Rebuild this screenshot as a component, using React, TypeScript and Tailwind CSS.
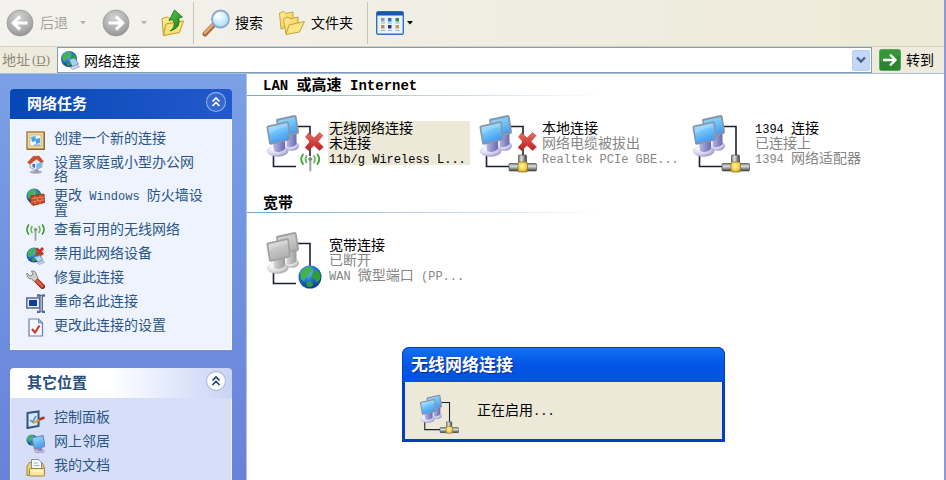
import React from "react";

type Overlay = "antenna" | "plug" | "globe";

/* Latin runs use half-width monospaced letters beside the full-width Chinese ones. */
function Latin({ children }: { children: string }) {
  return <span className="whitespace-pre font-['Liberation_Mono',monospace] text-[12px] leading-[12px]">{children}</span>;
}

function SharedPaints() {
  return (
    <svg className="absolute h-0 w-0" aria-hidden="true">
      <defs>
        <linearGradient id="screen" x1="0" y1="0" x2="0.4" y2="1">
          <stop offset="0" stopColor="#9fdcfb" />
          <stop offset="0.5" stopColor="#70c4fa" />
          <stop offset="1" stopColor="#459cf0" />
        </linearGradient>
        <linearGradient id="screenOff" x1="0" y1="0" x2="0.4" y2="1">
          <stop offset="0" stopColor="#dadada" />
          <stop offset="1" stopColor="#b2b2b2" />
        </linearGradient>
        <linearGradient id="neck" x1="0" y1="0" x2="1" y2="0">
          <stop offset="0" stopColor="#b9b8e4" />
          <stop offset="1" stopColor="#6a69b2" />
        </linearGradient>
        <linearGradient id="neckOff" x1="0" y1="0" x2="1" y2="0">
          <stop offset="0" stopColor="#d8d8d8" />
          <stop offset="1" stopColor="#9c9c9c" />
        </linearGradient>
        <radialGradient id="base" cx="0.35" cy="0.3" r="0.8">
          <stop offset="0" stopColor="#ffffff" />
          <stop offset="0.6" stopColor="#d3d0ec" />
          <stop offset="1" stopColor="#8683bd" />
        </radialGradient>
        <radialGradient id="baseOff" cx="0.35" cy="0.3" r="0.8">
          <stop offset="0" stopColor="#ffffff" />
          <stop offset="0.6" stopColor="#dcdcdc" />
          <stop offset="1" stopColor="#969696" />
        </radialGradient>
        <radialGradient id="earth" cx="0.4" cy="0.3" r="0.75">
          <stop offset="0" stopColor="#7cc4f8" />
          <stop offset="0.5" stopColor="#1e6fd6" />
          <stop offset="1" stopColor="#08308c" />
        </radialGradient>
        <linearGradient id="pipe" x1="0" y1="0" x2="0" y2="1">
          <stop offset="0" stopColor="#6f736f" />
          <stop offset="0.35" stopColor="#dfe3df" />
          <stop offset="1" stopColor="#3d423d" />
        </linearGradient>
        <linearGradient id="pipeUp" x1="0" y1="0" x2="1" y2="0">
          <stop offset="0" stopColor="#6f736f" />
          <stop offset="0.35" stopColor="#dfe3df" />
          <stop offset="1" stopColor="#3d423d" />
        </linearGradient>
        <radialGradient id="gold" cx="0.45" cy="0.4" r="0.7">
          <stop offset="0" stopColor="#fff6a0" />
          <stop offset="0.6" stopColor="#f3cf4c" />
          <stop offset="1" stopColor="#b98a1c" />
        </radialGradient>
        <linearGradient id="cross" x1="0" y1="0" x2="0" y2="1">
          <stop offset="0" stopColor="#ee6a62" />
          <stop offset="1" stopColor="#b8201f" />
        </linearGradient>
        <radialGradient id="grayBall" cx="0.45" cy="0.3" r="0.75">
          <stop offset="0" stopColor="#d2d2d2" />
          <stop offset="0.7" stopColor="#a9a9a9" />
          <stop offset="1" stopColor="#8c8c8c" />
        </radialGradient>
        <linearGradient id="folder" x1="0" y1="0" x2="1" y2="1">
          <stop offset="0" stopColor="#fff3a0" />
          <stop offset="1" stopColor="#ecc142" />
        </linearGradient>
        <linearGradient id="leaf" x1="0" y1="0" x2="1" y2="1">
          <stop offset="0" stopColor="#5fc94c" />
          <stop offset="1" stopColor="#127c1b" />
        </linearGradient>
        <radialGradient id="lens" cx="0.4" cy="0.35" r="0.7">
          <stop offset="0" stopColor="#ffffff" />
          <stop offset="1" stopColor="#a5dcf5" />
        </radialGradient>
      </defs>
    </svg>
  );
}

function Earth({ cx, cy, r }: { cx: number; cy: number; r: number }) {
  return (
    <g transform={`translate(${cx} ${cy}) scale(${r / 10})`}>
      <circle r="10" fill="url(#earth)" />
      <path d="M-8-4C-6-8-2-9 1-9L3-6 0-4-1-1-4 0-5 4-8 2Z" fill="#45b34a" />
      <path d="M2-3 6-6 9-3 9 2 6 5 4 2 1 1ZM-3 4 1 4 3 7 0 9-3 8Z" fill="#2f9c3a" />
    </g>
  );
}

function ConnectionIcon({ overlay, broken = false, off = false, className }: { overlay: Overlay; broken?: boolean; off?: boolean; className: string }) {
  const screen = off ? "url(#screenOff)" : "url(#screen)";
  const base = off ? "url(#baseOff)" : "url(#base)";
  const frame = off ? "#a0a0a0" : "#8796a8";
  const neck = off ? "url(#neckOff)" : "url(#neck)";
  return (
    <svg viewBox="0 0 59 59" className={className} aria-hidden="true">
      <path d="M33 12.500H45V42" fill="none" stroke="#1c2035" strokeWidth="1.600" />
      <path d="M8.500 41V52.500H31" fill="none" stroke="#1c2035" strokeWidth="1.600" />
      <ellipse cx="26.500" cy="32" rx="7.500" ry="4.800" fill={base} />
      <path d="M21 20 31.500 19 31.500 30Q28 34 22 33Z" fill={neck} />
      <path d="M11 6.500Q11 5 12.500 4.700L29.500 1Q31.300 .8 31.600 2.500L34 17.800Q34 19.500 32.500 20L15 24Z" fill={frame} />
      <path d="M12.800 6.800 30 3 32 18 15 22Z" fill={screen} />
      <ellipse cx="12.500" cy="37" rx="11" ry="5.800" fill={base} />
      <path d="M8 28 20 25 20 35Q15 40 9 37Z" fill={neck} />
      <path d="M1.500 13.500Q1.300 11.800 3 11.400L21.800 7.300Q23.500 7 23.900 8.700L25.500 24.500Q25.600 26 24 26.500L6 30.700Q4.300 31 4 29.300Z" fill={frame} />
      <path d="M3.300 13.200 22.300 9.100 23.900 24.900 5.600 29Z" fill={screen} />
      <path d="M3.300 13.200 22.300 9.100 22.700 13Q12 14 4.200 20Z" fill="#fff" opacity=".2" />
      {overlay === "plug" && (
        <g>
          <rect x="40.500" y="41" width="8" height="9" rx="1" fill="url(#pipeUp)" stroke="#3e423e" strokeWidth=".6" />
          <rect x="31" y="49.500" width="27.500" height="7.500" rx="1" fill="url(#pipe)" stroke="#3e423e" strokeWidth=".6" />
          <rect x="40" y="48" width="9.500" height="10" rx="1.500" fill="url(#gold)" stroke="#8f7522" strokeWidth=".7" />
        </g>
      )}
      {overlay === "antenna" && (
        <g fill="none" strokeWidth="1.800" strokeLinecap="round">
          <path d="M45.300 46V56.500" stroke="#9aa29a" strokeWidth="2" />
          <circle cx="45.300" cy="45" r="1.500" fill="#7f887f" stroke="#7f887f" strokeWidth="1" />
          <path d="M41.500 42Q39.500 45 41.500 48.500M49 42Q51 45 49 48.500" stroke="#6fb863" />
          <path d="M38 40.500Q34.500 45 38 50M52.500 40.500Q56 45 52.500 50" stroke="#3da52e" />
        </g>
      )}
      {overlay === "globe" && <Earth cx={45} cy={46} r={11.5} />}
      {broken && (
        <path d="M40.500 23 43.500 19 49 24 54.500 18.500 58 21.500 53 27.500 58.500 33 54.500 36.500 49 31.500 43.500 36.500 40 33.500 45 27.700Z" fill="url(#cross)" stroke="#b94c4c" strokeWidth=".6" />
      )}
    </svg>
  );
}

function RoundArrow({ forward = false }: { forward?: boolean }) {
  return (
    <svg viewBox="0 0 28 28" className="h-7 w-7" aria-hidden="true">
      <circle cx="14" cy="14" r="13" fill="url(#grayBall)" stroke="#9a9a9a" strokeWidth=".8" />
      <path
        d={forward ? "M6.500 14H20M14 7.500 20.500 14 14 20.500" : "M21.500 14H8M14 7.500 7.500 14 14 20.500"}
        fill="none"
        stroke="#fff"
        strokeWidth="3.200"
      />
    </svg>
  );
}

function Caret({ className }: { className: string }) {
  return (
    <svg viewBox="0 0 6 4" className={`h-1 w-1.5 ${className}`} aria-hidden="true">
      <path d="M0 0H6L3 3.500Z" fill="currentColor" />
    </svg>
  );
}

function Toolbar() {
  return (
    <div role="toolbar" aria-label="标准按钮" className="flex h-[47px] shrink-0 items-center border-b border-[#d8d2bd] bg-linear-to-r from-[#f3f2ee] to-[#edead8] pl-1.5 pb-px text-[14px] leading-4">
      <button type="button" disabled className="flex items-center gap-1.5 text-[#a5a398]">
        <RoundArrow />
        后退
      </button>
      <Caret className="ml-3 text-[#b4b2a8]" />
      <button type="button" disabled aria-label="前进" className="ml-4">
        <RoundArrow forward />
      </button>
      <Caret className="ml-[11px] text-[#b4b2a8]" />
      <button type="button" aria-label="向上" className="ml-3.5">
        <svg viewBox="0 0 24 28" className="h-7 w-6" aria-hidden="true">
          <path d="M1 9.500 6.500 8 8.500 9.500 18 8V23L2.500 26.500Z" fill="url(#folder)" stroke="#c29b2c" />
          <path d="M2.500 26.500 5 15 22.500 12 18.500 23.500Z" fill="#fbe37b" stroke="#c29b2c" />
          <path d="M9 22Q15.500 18 12 10.500L8 11.500 13.500 1 21.500 8 17.500 9Q20.500 19 9 22Z" fill="url(#leaf)" stroke="#176f1b" strokeWidth=".8" />
        </svg>
      </button>
      <span className="ml-2 h-[42px] w-px bg-[#c9c5b4]" />
      <button type="button" className="ml-2 flex items-center gap-1">
        <svg viewBox="0 0 29 28" className="h-7 w-[29px]" aria-hidden="true">
          <path d="M3 25 12 15.500" stroke="#a96a3c" strokeWidth="5" strokeLinecap="round" />
          <path d="M3 24 11.500 15" stroke="#e6ab76" strokeWidth="2.500" strokeLinecap="round" />
          <circle cx="18.500" cy="10" r="8.500" fill="url(#lens)" stroke="#86a9cc" strokeWidth="1.800" />
          <path d="M13 9Q14 5 18 4.500" fill="none" stroke="#fff" strokeWidth="1.500" />
        </svg>
        搜索
      </button>
      <button type="button" className="ml-[15px] flex items-center gap-[5px]">
        <svg viewBox="0 0 28 26" className="h-[26px] w-7" aria-hidden="true">
          <path d="M1.500 3 6 1.500 8 3.500 15 2V15L3 19Z" fill="url(#folder)" stroke="#c9a136" />
          <path d="M5.500 9 10 7 12 9 20 7V19L8 24Z" fill="url(#folder)" stroke="#c9a136" />
          <path d="M8 24.500 11 15 26.500 11.500 21.500 22Z" fill="#fbe684" stroke="#c9a136" />
        </svg>
        文件夹
      </button>
      <span className="ml-3.5 h-[42px] w-px bg-[#c9c5b4]" />
      <button type="button" aria-label="查看" className="ml-2 flex items-center gap-[3px]">
        <svg viewBox="0 0 28 24" className="h-6 w-7" aria-hidden="true">
          <rect x=".7" y=".7" width="26.600" height="22.600" rx="1.500" fill="#e9f3fd" stroke="#2e70b5" strokeWidth="1.400" />
          <rect x="1" y="1" width="26" height="3.500" fill="#1c57a9" />
          <g>
            <path d="M5 7h3.500v3.500H5z" fill="#8d9aa8" />
            <path d="M12 7h3.500v3.500H12z" fill="#2d6fc0" />
            <path d="M19.500 7H23v3.500h-3.500z" fill="#2b9247" />
            <path d="M5 14h3.500v3.500H5z" fill="#d8834a" />
            <path d="M12 14h3.500v3.500H12z" fill="#21386f" />
            <path d="M19.500 14H23v3.500h-3.500z" fill="#c8a13a" />
            <path d="M5 12h4M12 12h4M19.500 12h4M5 19.500h4M12 19.500h4M19.500 19.500h4" stroke="#9db4cc" />
          </g>
        </svg>
        <Caret className="text-black" />
      </button>
    </div>
  );
}

function AddressBar() {
  return (
    <form className="flex h-[27px] shrink-0 items-stretch border-b border-[#a5bfd6] bg-[#eeebdc] pr-2.5 text-[14px] leading-4" onSubmit={(e) => e.preventDefault()}>
      <label htmlFor="address" className="flex w-[57px] shrink-0 items-center pl-0.5 text-[#8b887c]">
        地址
        <span className="ml-0.5 font-['Liberation_Serif',serif] text-[13px]">
          (<u>D</u>)
        </span>
      </label>
      <div className="flex min-w-0 flex-1 items-center border border-[#7f9db9] bg-white pl-0.5 pr-px">
        <svg viewBox="0 0 20 20" className="h-5 w-5 shrink-0" aria-hidden="true">
          <Earth cx={9} cy={9} r={8} />
          <path d="M9 9.500 15 8 18.500 14 12.500 16.500Z" fill="#9fd3f4" stroke="#6f87a6" strokeWidth=".8" />
          <path d="M10 17.500 18 14.500 19.500 17 13 19.500Z" fill="#d5daea" stroke="#8791ad" strokeWidth=".6" />
        </svg>
        <input id="address" defaultValue="网络连接" className="ml-1 h-full min-w-0 flex-1 bg-transparent text-black outline-none" />
        <button type="button" aria-label="显示地址列表" className="flex h-[21px] w-[18px] items-center justify-center rounded-xs border border-[#b9cdf4] bg-[#c6d6f8]">
          <svg viewBox="0 0 10 8" className="h-2 w-2.5" aria-hidden="true">
            <path d="M1 1.500 5 5.500 9 1.500" fill="none" stroke="#45608f" strokeWidth="2.400" />
          </svg>
        </button>
      </div>
      <button type="submit" className="ml-[7px] flex items-center gap-[5px] text-black">
        <svg viewBox="0 0 22 22" className="h-[22px] w-[22px]" aria-hidden="true">
          <rect x=".5" y=".5" width="21" height="21" rx="2" fill="#37953a" stroke="#5da65b" />
          <path d="M1 21V12Q12 14 21 6V21Z" fill="#1f7d26" opacity=".6" />
          <path d="M4 11H16M11 5.500 16.500 11 11 16.500" fill="none" stroke="#fff" strokeWidth="2.400" />
        </svg>
        转到
      </button>
    </form>
  );
}

const taskIcon: Record<string, React.ReactNode> = {
  create: (
    <>
      <rect x="1" y="1" width="17" height="17" fill="#ecd9a0" stroke="#a28443" strokeWidth="1.500" />
      <rect x="4" y="4" width="11" height="11" fill="#f4f8ff" stroke="#c4b27c" strokeWidth=".8" />
      <path d="M5 6 9.500 5V10L6 11ZM9.500 8 14 7 14 12 10 13Z" fill="#48a3e6" />
      <path d="M8 14H14" stroke="#7c8fb4" />
      <path d="M1 18.500H18.500V1" stroke="#8c6b2c" fill="none" />
    </>
  ),
  home: (
    <>
      <ellipse cx="10" cy="17" rx="6" ry="1.800" fill="#a9a9bc" />
      <path d="M9 13H12V17H9Z" fill="#8f93b4" />
      <path d="M4 7V12.500L9.500 15 16 12V6L10.500 3Z" fill="#e3eaf6" stroke="#8b96b0" strokeWidth=".8" />
      <path d="M10.500 9 15.500 7V12L10.500 14.500Z" fill="#7fb9ec" />
      <path d="M1.500 7.500 7 1.500 13 1 17.500 6.500 15 7.500 10.500 4 4 9Z" fill="#cf4f2c" stroke="#9a3a20" strokeWidth=".5" />
      <path d="M6.500 9H9V13L6.500 12Z" fill="#3d73c5" />
    </>
  ),
  firewall: (
    <>
      <Earth cx={8} cy={8} r={7.5} />
      <path d="M5 8 18 6 18.500 14.500 7 17.500 4.500 15Z" fill="#cc4420" stroke="#822812" strokeWidth=".8" />
      <path d="M5 11 18.500 8.800M5 14 18.500 11.800M9 7.500V10.500M14 7V9.500M11.500 10V13M16 9.500V12M9 13.500V16.500M14 12.500V15.500" stroke="#f0a076" strokeWidth=".7" />
    </>
  ),
  wireless: (
    <g fill="none" strokeLinecap="round" strokeWidth="1.600">
      <path d="M9.500 8V18" stroke="#9aa39a" strokeWidth="1.800" />
      <circle cx="9.500" cy="7.500" r="1.500" fill="#8c968c" stroke="#8c968c" strokeWidth=".6" />
      <path d="M6 4.500Q4 7.500 6 10.500M13 4.500Q15 7.500 13 10.500" stroke="#6cb65f" />
      <path d="M2.500 3Q-.5 7.500 2.500 12M16.500 3Q19.500 7.500 16.500 12" stroke="#369a2b" />
    </g>
  ),
  disable: (
    <>
      <Earth cx={8} cy={9} r={7.5} />
      <path d="M8 11 14 9.500 17 14 12 16Z" fill="#a6d8f7" stroke="#6b84a5" strokeWidth=".7" />
      <path d="M11 17 17 14.500 18.500 16.500 13.500 18.500Z" fill="#cfd5e8" stroke="#8089a5" strokeWidth=".5" />
      <path d="M10.500 2.500 17 8.500M17 2 10.500 9" stroke="#cf3326" strokeWidth="3" />
    </>
  ),
  repair: (
    <>
      <path d="M9 9 16.500 16.500" stroke="#8c2718" strokeWidth="5" strokeLinecap="round" />
      <path d="M9 9 16 16" stroke="#e25a3d" strokeWidth="3" strokeLinecap="round" />
      <path d="M1 3 4 6 7 4.500 5.500 1Q10 .5 10.500 5L12 8 8.500 11.500 5.500 9Q.5 9 1 3Z" fill="#cfcfcf" stroke="#6f6f6f" strokeWidth=".8" />
    </>
  ),
  rename: (
    <>
      <rect x=".8" y="4" width="13" height="10" fill="#e6ecfa" stroke="#4d6187" strokeWidth="1.400" />
      <rect x="3" y="6" width="8" height="6" fill="#0c3da8" />
      <path d="M11 1.500H14.500M16 1.500H19M15.200 2V17.500M11 18H14.500M16 18H19" stroke="#56668f" strokeWidth="2.400" />
      <path d="M15.200 1V18" stroke="#56668f" strokeWidth="3.600" />
      <path d="M15.200 2V17.500" stroke="#b7c1dd" strokeWidth="1.400" />
    </>
  ),
  settings: (
    <>
      <path d="M3 1H12.500L16.500 5V18H3Z" fill="#f4f8ff" stroke="#657fae" strokeWidth="1.200" />
      <path d="M12.500 1V5H16.500Z" fill="#aac2ea" stroke="#657fae" strokeWidth=".8" />
      <path d="M6 11 9 14.500 13.500 7.500" fill="none" stroke="#cf3a2b" strokeWidth="2.200" />
    </>
  ),
  control: (
    <>
      <path d="M1.500 3 12.500 1.500V16L1.500 18Z" fill="#d7eafb" stroke="#2d5485" strokeWidth="2" />
      <path d="M4 10 6.500 12 10 6" fill="none" stroke="#5590c6" strokeWidth="1.500" />
      <path d="M7 13 16 8.500" stroke="#d0a13d" strokeWidth="2" />
      <path d="M13 9.500 18.500 7.500" stroke="#a33c2c" strokeWidth="2.500" />
    </>
  ),
  places: (
    <>
      <Earth cx={6} cy={6} r={5.5} />
      <ellipse cx="13.500" cy="17" rx="5" ry="2" fill="#bdbfdc" stroke="#8083a8" strokeWidth=".5" />
      <path d="M11 12H16V17H12Z" fill="#8886bd" />
      <path d="M6 4 17 1.500 19 12.500 8.500 15Z" fill="url(#screen)" stroke="#7a88a8" strokeWidth="1.200" />
    </>
  ),
  documents: (
    <>
      <path d="M1 8 3.500 4.500H16L18.500 10V17.500H1Z" fill="#efcf6b" stroke="#a7832f" />
      <path d="M5.500 1.500H12.500L15.500 4.500V13H5.500Z" fill="#f7faff" stroke="#7e90b0" />
      <path d="M7.500 5H12M7.500 7.500H13.500" stroke="#9db5d6" />
      <rect x="3.500" y="10.500" width="15" height="7.500" rx="1" fill="#f8e7a0" stroke="#a7832f" />
      <path d="M5.500 13H16.500" stroke="#fffbe0" strokeWidth="1.500" />
    </>
  ),
};

function TaskLink({ icon, children }: { icon: string; children: React.ReactNode }) {
  return (
    <li>
      <a href="#" className="flex min-h-[19px] items-start gap-[9px] text-[14px] leading-[14px] text-[#2a5687]">
        <svg viewBox="0 0 19 19" className="h-[19px] w-[19px] shrink-0" aria-hidden="true">
          {taskIcon[icon]}
        </svg>
        <span className="w-[152px]">{children}</span>
      </a>
    </li>
  );
}

function Panel({ title, primary = false, children }: { title: string; primary?: boolean; children: React.ReactNode }) {
  return (
    <section>
      <h2
        className={
          primary
            ? "flex h-[30px] items-center justify-between rounded-t-[4px] bg-linear-to-r from-[#0448b4] to-[#2259cc] pl-[17px] pr-[5px] text-[15px] font-bold leading-5 text-white"
            : "flex h-[30px] items-center justify-between rounded-t-[4px] bg-linear-to-r from-white from-45% to-[#c8d4f6] pl-[17px] pr-[5px] text-[15px] font-bold leading-5 text-[#27507f]"
        }
      >
        {title}
        <button type="button" aria-label={`折叠${title}`} className={primary ? "text-white" : "text-[#1f3f6c]"}>
          <svg viewBox="0 0 22 22" className="-mt-1 h-[22px] w-[22px]" aria-hidden="true">
            <circle cx="11" cy="11" r="9.500" fill={primary ? "#3468cf" : "#fff"} stroke={primary ? "#7fa3e6" : "#b6bfdc"} strokeWidth="1.300" />
            <path d="M7.500 10.500 11 7 14.500 10.500M7.500 15 11 11.500 14.500 15" fill="none" stroke="currentColor" strokeWidth="1.700" />
          </svg>
        </button>
      </h2>
      <ul
        className={
          primary
            ? "flex flex-col gap-[5px] border border-t-0 border-white bg-[#eff3fe] px-[15px] pb-3 pt-3"
            : "flex flex-col gap-[5px] border border-t-0 border-[#eef2fd] bg-[#d6dff7] px-[15px] pb-3 pt-3"
        }
      >
        {children}
      </ul>
    </section>
  );
}

function Sidebar() {
  return (
    <aside className="flex w-[246px] shrink-0 flex-col gap-[18px] bg-linear-to-b from-[#7ba0e6] to-[#6882d9] pl-2.5 pr-3.5 pt-[15px]">
      <Panel title="网络任务" primary>
        <TaskLink icon="create">创建一个新的连接</TaskLink>
        <TaskLink icon="home">设置家庭或小型办公网络</TaskLink>
        <TaskLink icon="firewall">
          更改<Latin>{" Windows "}</Latin>防火墙设置
        </TaskLink>
        <TaskLink icon="wireless">查看可用的无线网络</TaskLink>
        <TaskLink icon="disable">禁用此网络设备</TaskLink>
        <TaskLink icon="repair">修复此连接</TaskLink>
        <TaskLink icon="rename">重命名此连接</TaskLink>
        <TaskLink icon="settings">更改此连接的设置</TaskLink>
      </Panel>
      <Panel title="其它位置">
        <TaskLink icon="control">控制面板</TaskLink>
        <TaskLink icon="places">网上邻居</TaskLink>
        <TaskLink icon="documents">我的文档</TaskLink>
      </Panel>
    </aside>
  );
}

function Connection({
  name,
  status,
  device,
  selected = false,
  ...icon
}: {
  name: React.ReactNode;
  status: string;
  device: React.ReactNode;
  selected?: boolean;
  overlay: Overlay;
  broken?: boolean;
  off?: boolean;
}) {
  return (
    <li className="flex w-[213px] shrink-0 items-start gap-1">
      <ConnectionIcon {...icon} className="h-[59px] w-[59px] shrink-0" />
      <div
        className={
          selected
            ? "mt-[7px] w-[142px] whitespace-nowrap bg-[#ece9d8] pl-px text-[14px] leading-[15px] text-black"
            : "mt-[7px] w-[142px] whitespace-nowrap pl-px text-[14px] leading-[15px] text-[#868686]"
        }
      >
        <p className="text-black">{name}</p>
        <p>{status}</p>
        <p className="h-[14px]">{device}</p>
      </div>
    </li>
  );
}

function Group({ title, children }: { title: React.ReactNode; children: React.ReactNode }) {
  return (
    <section className="flex h-[117px] flex-col">
      <h2 className="flex h-5 items-center pl-4 pt-0.5 text-[15px] font-bold leading-[18px] text-black">{title}</h2>
      <div className="h-px w-[354px] bg-linear-to-r from-[#70a8d0] to-white" />
      <ul className="flex pl-[18px] pt-[18px]">{children}</ul>
    </section>
  );
}

function ProgressDialog() {
  return (
    <div role="dialog" aria-labelledby="dialog-title" className="absolute left-[402px] top-[347px] w-[323px] rounded-t-[8px] bg-[#0a3bc4] px-[3px] pb-[3px]">
      <h2
        id="dialog-title"
        className="-mx-[3px] flex h-[35px] items-center rounded-t-[7px] border border-b-0 border-[#0b3fc0] bg-linear-to-b from-[#1370f2] via-[#0455e6] to-[#0352e0] pl-2 pt-0.5 text-[17px] font-bold leading-5 text-white [text-shadow:1px_1px_1px_#0a2a8c]"
      >
        无线网络连接
      </h2>
      <div className="flex h-[57px] items-start bg-[#ece9d8] pl-[14px] pt-3">
        <ConnectionIcon overlay="plug" className="h-10 w-10" />
        <p className="ml-[18px] pt-2 text-[14px] leading-4 text-black">
          正在启用<Latin>...</Latin>
        </p>
      </div>
    </div>
  );
}

export default function App() {
  return (
    <div className="relative flex h-screen flex-col overflow-hidden border-r-2 border-[#8c9ad6] bg-white font-['Liberation_Sans','Noto_Sans_CJK_SC',sans-serif]">
      <SharedPaints />
      <Toolbar />
      <AddressBar />
      <div className="flex min-h-0 flex-1">
        <Sidebar />
        <main className="min-w-0 flex-1 overflow-hidden border-l border-[#a9c6ea] pt-px">
          <Group
            title={
              <span className="whitespace-pre font-['Liberation_Mono','Noto_Sans_CJK_SC',monospace]">
                <span className="text-[14px]">{"LAN "}</span>或高速<span className="text-[14px]">{" Internet"}</span>
              </span>
            }
          >
            <Connection name="无线网络连接" status="未连接" device={<Latin>11b/g Wireless L...</Latin>} overlay="antenna" broken selected />
            <Connection name="本地连接" status="网络电缆被拔出" device={<Latin>Realtek PCIe GBE...</Latin>} overlay="plug" broken />
            <Connection
              name={<><Latin>{"1394 "}</Latin>连接</>}
              status="已连接上"
              device={<><Latin>{"1394 "}</Latin>网络适配器</>}
              overlay="plug"
            />
          </Group>
          <Group title="宽带">
            <Connection
              name="宽带连接"
              status="已断开"
              device={<><Latin>{"WAN "}</Latin>微型端口<Latin>{" (PP..."}</Latin></>}
              overlay="globe"
              off
            />
          </Group>
        </main>
      </div>
      <ProgressDialog />
    </div>
  );
}
